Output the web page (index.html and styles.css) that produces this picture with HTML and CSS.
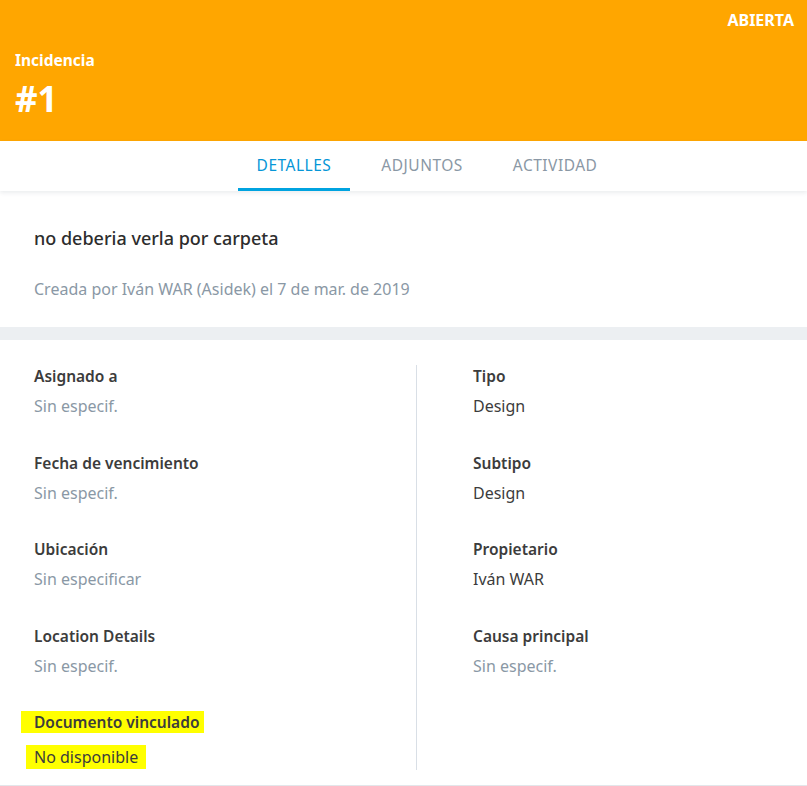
FILE: index.html
```html
<!DOCTYPE html>
<html lang="es">
<head>
<meta charset="utf-8">
<title>Incidencia #1</title>
<link rel="stylesheet" href="styles.css">
</head>
<body>
<div class="page">
  <header class="hero">
    <div class="status">ABIERTA</div>
    <div class="kind">Incidencia</div>
    <div class="num">#1</div>
  </header>
  <nav class="tabs">
    <div class="tab active">DETALLES</div>
    <div class="tab">ADJUNTOS</div>
    <div class="tab">ACTIVIDAD</div>
  </nav>
  <section class="summary">
    <h1 class="title">no deberia verla por carpeta</h1>
    <p class="created">Creada por Iván WAR (Asidek) el 7 de mar. de 2019</p>
  </section>
  <div class="band"></div>
  <section class="details">
    <div class="col left">
      <div class="field">
        <div class="label">Asignado a</div>
        <div class="value muted">Sin especif.</div>
      </div>
      <div class="field">
        <div class="label">Fecha de vencimiento</div>
        <div class="value muted">Sin especif.</div>
      </div>
      <div class="field">
        <div class="label">Ubicación</div>
        <div class="value muted">Sin especificar</div>
      </div>
      <div class="field">
        <div class="label">Location Details</div>
        <div class="value muted">Sin especif.</div>
      </div>
      <div class="field last">
        <div class="label"><span class="mark mark-a">Documento vinculado</span></div>
        <div class="value hl"><span class="mark mark-b">No disponible</span></div>
      </div>
    </div>
    <div class="col right">
      <div class="field">
        <div class="label">Tipo</div>
        <div class="value">Design</div>
      </div>
      <div class="field">
        <div class="label">Subtipo</div>
        <div class="value">Design</div>
      </div>
      <div class="field">
        <div class="label">Propietario</div>
        <div class="value">Iván WAR</div>
      </div>
      <div class="field">
        <div class="label">Causa principal</div>
        <div class="value muted">Sin especif.</div>
      </div>
    </div>
  </section>
</div>
</body>
</html>
```

FILE: styles.css
```css
* { box-sizing: border-box; }
html, body {
  margin: 0;
  padding: 0;
  background: #ffffff;
}
body {
  font-family: "Noto Sans", "Open Sans", sans-serif;
  color: #3c3c3c;
}
.page {
  width: 807px;
  min-height: 786px;
}
.hero {
  background: #ffa600;
  height: 141px;
  padding: 9px 13px 0 15px;
  color: #ffffff;
  display: flex;
  flex-direction: column;
}
.status {
  align-self: flex-end;
  font-weight: 700;
  font-size: 16px;
  line-height: 22px;
}
.kind {
  margin-top: 18px;
  font-weight: 700;
  font-size: 15.5px;
  line-height: 22px;
}
.num {
  margin-top: 8px;
  font-weight: 700;
  font-size: 35px;
  line-height: 40px;
}
.tabs {
  height: 50px;
  display: flex;
  justify-content: center;
  gap: 12px;
  padding-left: 47px;
  background: #ffffff;
  box-shadow: 0 2px 4px rgba(60, 80, 100, 0.10);
  position: relative;
}
.tab {
  padding: 2px 19px 0 19px;
  height: 50px;
  line-height: 45px;
  font-size: 15.5px;
  letter-spacing: 0.5px;
  color: #8a98a5;
  border-bottom: 3px solid transparent;
}
.tab.active {
  color: #0696d7;
  border-bottom-color: #00a3e0;
}
.summary {
  padding: 34px 34px 0 34px;
  height: 136px;
}
.title {
  margin: 0;
  font-size: 18px;
  font-weight: 500;
  line-height: 26px;
  color: #2d2d2d;
}
.created {
  margin: 27px 0 0 0;
  font-size: 16px;
  line-height: 22px;
  color: #8a98a5;
}
.band {
  height: 13px;
  background: #eceff2;
}
.details {
  display: flex;
  padding-top: 25px;
  padding-bottom: 15px;
  border-bottom: 1px solid #e3e6ea;
}
.col {
  display: flex;
  flex-direction: column;
}
.col.left {
  width: 417px;
  padding-left: 34px;
  border-right: 1px solid #d9dfe6;
}
.col.right {
  padding-left: 56px;
}
.field {
  height: 86.5px;
}
.field.last {
  height: 59px;
}
.label {
  font-size: 15.5px;
  font-weight: 600;
  line-height: 22px;
  color: #3c3c3c;
}
.value {
  margin-top: 8px;
  font-size: 16px;
  line-height: 22px;
  color: #3c3c3c;
}
.value.muted {
  color: #8a98a5;
}
.value.hl {
  margin-top: 12px;
}
.mark {
  background: #ffff00;
  display: inline-block;
}
.mark-a {
  margin-left: -13px;
  padding: 0 5px 0 13px;
}
.mark-b {
  margin-left: -8px;
  padding: 1px 8px 1px 8px;
}
```
